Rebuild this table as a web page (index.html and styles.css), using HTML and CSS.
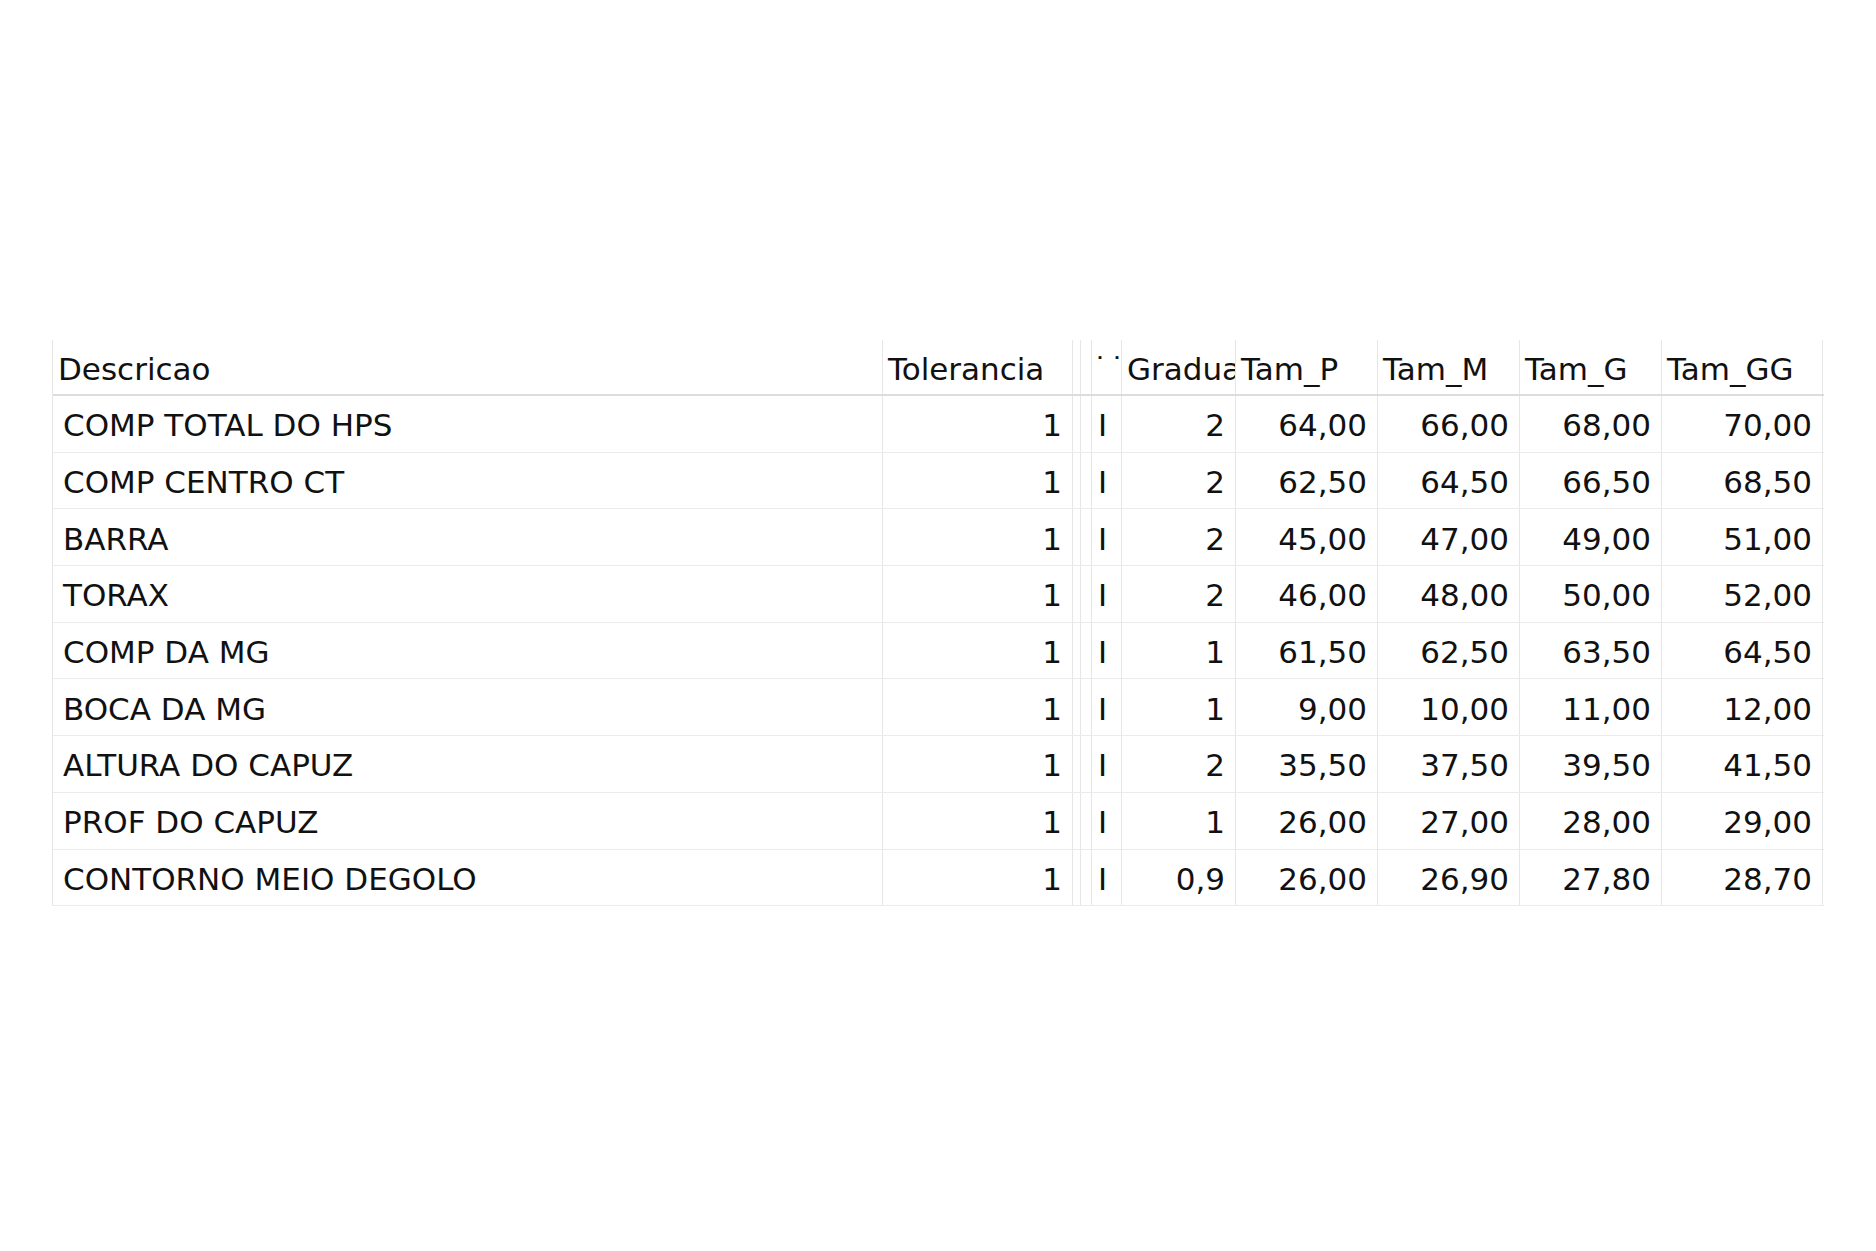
FILE: index.html
```html
<!DOCTYPE html>
<html lang="pt">
<head>
<meta charset="utf-8">
<title>Medidas</title>
<link rel="stylesheet" href="styles.css">
</head>
<body>
<div class="grid">
  <div class="row head">
    <div class="cell">Descricao</div>
    <div class="cell">Tolerancia</div>
    <div class="cell"></div>
    <div class="cell"></div>
    <div class="cell dots">˙˙</div>
    <div class="cell">Graduacao</div>
    <div class="cell">Tam_P</div>
    <div class="cell">Tam_M</div>
    <div class="cell">Tam_G</div>
    <div class="cell">Tam_GG</div>
  </div>
  <div class="row">
    <div class="cell txt">COMP TOTAL DO HPS</div><div class="cell num">1</div><div class="cell"></div><div class="cell"></div><div class="cell flag">I</div><div class="cell num">2</div><div class="cell num">64,00</div><div class="cell num">66,00</div><div class="cell num">68,00</div><div class="cell num">70,00</div>
  </div>
  <div class="row">
    <div class="cell txt">COMP CENTRO CT</div><div class="cell num">1</div><div class="cell"></div><div class="cell"></div><div class="cell flag">I</div><div class="cell num">2</div><div class="cell num">62,50</div><div class="cell num">64,50</div><div class="cell num">66,50</div><div class="cell num">68,50</div>
  </div>
  <div class="row">
    <div class="cell txt">BARRA</div><div class="cell num">1</div><div class="cell"></div><div class="cell"></div><div class="cell flag">I</div><div class="cell num">2</div><div class="cell num">45,00</div><div class="cell num">47,00</div><div class="cell num">49,00</div><div class="cell num">51,00</div>
  </div>
  <div class="row">
    <div class="cell txt">TORAX</div><div class="cell num">1</div><div class="cell"></div><div class="cell"></div><div class="cell flag">I</div><div class="cell num">2</div><div class="cell num">46,00</div><div class="cell num">48,00</div><div class="cell num">50,00</div><div class="cell num">52,00</div>
  </div>
  <div class="row">
    <div class="cell txt">COMP DA MG</div><div class="cell num">1</div><div class="cell"></div><div class="cell"></div><div class="cell flag">I</div><div class="cell num">1</div><div class="cell num">61,50</div><div class="cell num">62,50</div><div class="cell num">63,50</div><div class="cell num">64,50</div>
  </div>
  <div class="row">
    <div class="cell txt">BOCA DA MG</div><div class="cell num">1</div><div class="cell"></div><div class="cell"></div><div class="cell flag">I</div><div class="cell num">1</div><div class="cell num">9,00</div><div class="cell num">10,00</div><div class="cell num">11,00</div><div class="cell num">12,00</div>
  </div>
  <div class="row">
    <div class="cell txt">ALTURA DO CAPUZ</div><div class="cell num">1</div><div class="cell"></div><div class="cell"></div><div class="cell flag">I</div><div class="cell num">2</div><div class="cell num">35,50</div><div class="cell num">37,50</div><div class="cell num">39,50</div><div class="cell num">41,50</div>
  </div>
  <div class="row">
    <div class="cell txt">PROF DO CAPUZ</div><div class="cell num">1</div><div class="cell"></div><div class="cell"></div><div class="cell flag">I</div><div class="cell num">1</div><div class="cell num">26,00</div><div class="cell num">27,00</div><div class="cell num">28,00</div><div class="cell num">29,00</div>
  </div>
  <div class="row">
    <div class="cell txt">CONTORNO MEIO DEGOLO</div><div class="cell num">1</div><div class="cell"></div><div class="cell"></div><div class="cell flag">I</div><div class="cell num">0,9</div><div class="cell num">26,00</div><div class="cell num">26,90</div><div class="cell num">27,80</div><div class="cell num">28,70</div>
  </div>
</div>
</body>
</html>
```
FILE: styles.css
```css
html, body {
  margin: 0;
  padding: 0;
  background: #ffffff;
}
body {
  font-family: "DejaVu Sans", "Liberation Sans", sans-serif;
  font-size: 31px;
  color: #111111;
}
.grid {
  margin: 340px 0 0 52px;
  width: 1771px;
  border-left: 1px solid #e6e6e6;
}
.row {
  display: grid;
  grid-template-columns: 830px 190px 8px 11px 30px 114px 142px 142px 142px 161px;
  height: 56.7px;
  box-sizing: border-box;
  border-bottom: 1px solid #ebebeb;
}
.row.head {
  height: 56px;
  border-bottom: 2px solid #dcdcdc;
}
.cell {
  box-sizing: border-box;
  border-right: 1px solid #e6e6e6;
  display: flex;
  align-items: center;
  overflow: hidden;
  white-space: nowrap;
  line-height: 36px;
  padding-top: 3px;
}
.head .cell {
  padding: 3px 0 0 5px;
}
.head .dots {
  padding-left: 1px;
  letter-spacing: 3px;
  font-size: 28px;
}
.txt {
  padding-left: 10px;
}
.num {
  justify-content: flex-end;
  padding-right: 10px;
}
.flag {
  padding-left: 6px;
}
```
